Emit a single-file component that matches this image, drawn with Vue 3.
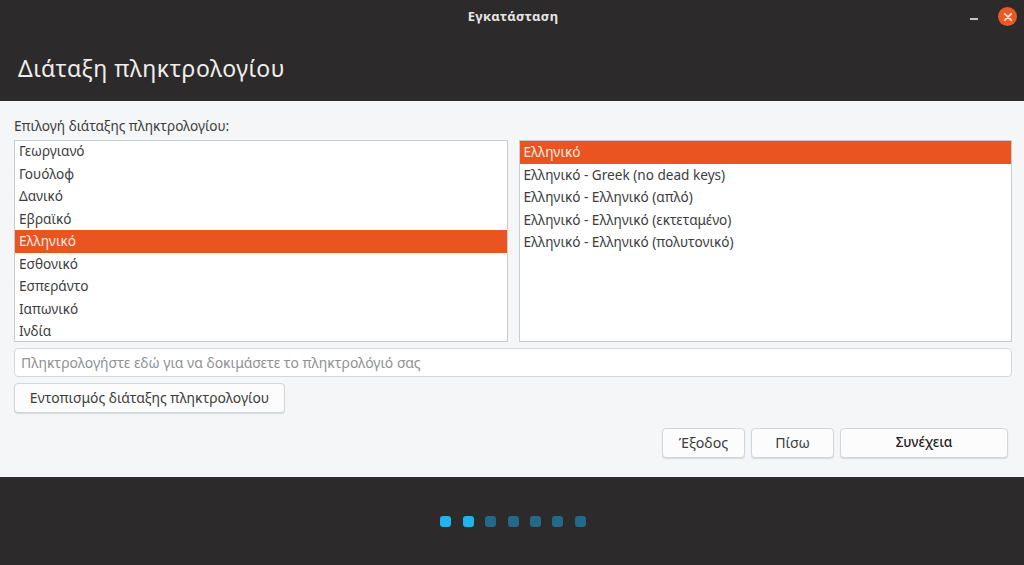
<script setup>
const layouts = ['Γεωργιανό', 'Γουόλοφ', 'Δανικό', 'Εβραϊκό', 'Ελληνικό', 'Εσθονικό', 'Εσπεράντο', 'Ιαπωνικό', 'Ινδία']
const variants = [
  'Ελληνικό',
  'Ελληνικό - Greek (no dead keys)',
  'Ελληνικό - Ελληνικό (απλό)',
  'Ελληνικό - Ελληνικό (εκτεταμένο)',
  'Ελληνικό - Ελληνικό (πολυτονικό)'
]
const dots = [true, true, false, false, false, false, false]
</script>

<template>
  <div class="window">
    <header class="titlebar">
      <span class="title">Εγκατάσταση</span>
      <span class="minimize"></span>
      <span class="close">
        <svg width="10" height="10" viewBox="0 0 10 10">
          <path d="M1.8 1.8 L8.2 8.2 M8.2 1.8 L1.8 8.2" stroke="#fbe3d8" stroke-width="1.7" stroke-linecap="round" />
        </svg>
      </span>
    </header>
    <div class="heading">
      <h1>Διάταξη πληκτρολογίου</h1>
    </div>
    <main class="content">
      <label class="label">Επιλογή διάταξης πληκτρολογίου:</label>
      <div class="lists">
        <ul class="list scrolled">
          <li v-for="item in layouts" :key="item" :class="{ selected: item === 'Ελληνικό' }">{{ item }}</li>
        </ul>
        <ul class="list">
          <li v-for="(item, i) in variants" :key="item" :class="{ selected: i === 0 }">{{ item }}</li>
        </ul>
      </div>
      <input class="entry" type="text" placeholder="Πληκτρολογήστε εδώ για να δοκιμάσετε το πληκτρολόγιό σας" />
      <div class="detect-row">
        <button class="btn detect">Εντοπισμός διάταξης πληκτρολογίου</button>
      </div>
      <div class="actions">
        <button class="btn small">Έξοδος</button>
        <button class="btn small">Πίσω</button>
        <button class="btn next">Συνέχεια</button>
      </div>
    </main>
    <footer class="footer">
      <span v-for="(on, i) in dots" :key="i" class="dot" :class="{ on }"></span>
    </footer>
  </div>
</template>

<style>
html, body {
  margin: 0;
  background: #2c2a2a;
}
</style>

<style scoped>
.window {
  width: 1024px;
  height: 565px;
  display: flex;
  flex-direction: column;
  font-family: "Noto Sans", "Open Sans", sans-serif;
  font-size: 14px;
  color: #3d3d3d;
  overflow: hidden;
}

.titlebar {
  height: 32px;
  flex: none;
  background: #2c2a2a;
  display: flex;
  align-items: center;
  position: relative;
  color: #e8e6e3;
}
.title {
  position: absolute;
  left: 0;
  right: 0;
  padding-left: 2px;
  text-align: center;
  font-weight: 700;
  font-size: 13px;
  letter-spacing: 0.35px;
}
.minimize {
  position: absolute;
  left: 970px;
  top: 18px;
  width: 8px;
  height: 2px;
  background: #c8c6c4;
}
.close {
  position: absolute;
  left: 998px;
  top: 7px;
  width: 19px;
  height: 19px;
  border-radius: 50%;
  background: #ea5a24;
  display: flex;
  align-items: center;
  justify-content: center;
}

.heading {
  height: 69px;
  flex: none;
  background: #2c2a2a;
  box-sizing: border-box;
  padding-left: 18px;
}
h1 {
  margin: 0;
  font-size: 23px;
  line-height: 72px;
  font-weight: 400;
  letter-spacing: 0.55px;
  color: #f0eeeb;
}

.content {
  height: 376px;
  flex: none;
  box-sizing: border-box;
  background: #f5f6f7;
  padding: 15px 12px 0 14px;
  display: flex;
  flex-direction: column;
}
.label {
  line-height: 20px;
  height: 24px;
  font-size: 13.6px;
}

.lists {
  display: flex;
  gap: 11px;
}
.list {
  width: 494px;
  height: 202px;
  box-sizing: border-box;
  margin: 0;
  padding: 0;
  list-style: none;
  background: #fff;
  border: 1px solid #c9cccf;
  overflow: hidden;
}
.list li {
  height: 22.5px;
  line-height: 22px;
  padding-left: 4px;
  font-size: 13.6px;
}
/* left list sits scrolled by a pixel */
.scrolled li:first-child {
  margin-top: -1px;
}
.list li.selected {
  background: #e95420;
  color: #fbe9e0;
}

.entry {
  display: block;
  width: 998px;
  height: 29px;
  box-sizing: border-box;
  margin-top: 6px;
  padding: 0 6px;
  background: #fff;
  border: 1px solid #d5d8da;
  border-radius: 4px;
  outline: none;
  font-family: inherit;
  font-size: 13.95px;
}
.entry::placeholder {
  color: #8f9193;
  opacity: 1;
}

.btn {
  height: 30px;
  box-sizing: border-box;
  padding: 0 0 2px;
  background: #fcfcfc;
  border: 1px solid #d3d6d9;
  border-radius: 4px;
  box-shadow: 0 1px 1px rgba(0, 0, 0, 0.12);
  font-family: inherit;
  font-size: 13.9px;
  color: #3d3d3d;
}
.detect-row {
  margin-top: 6px;
}
.detect {
  width: 271px;
}
.actions {
  margin-top: 15px;
  padding-right: 4px;
  display: flex;
  justify-content: flex-end;
  gap: 6px;
}
.small {
  width: 83px;
  font-size: 14.2px;
}
.next {
  width: 168px;
  font-size: 13.5px;
  font-weight: 500;
  color: #222;
}

.footer {
  flex: 1;
  background: #2c2a2a;
  display: flex;
  justify-content: center;
  align-items: center;
  gap: 11.4px;
  padding: 0 0 0 2px;
}
.dot {
  width: 11px;
  height: 11px;
  border-radius: 3px;
  background: #23698a;
}
.dot.on {
  background: #1fb4ee;
}
</style>
